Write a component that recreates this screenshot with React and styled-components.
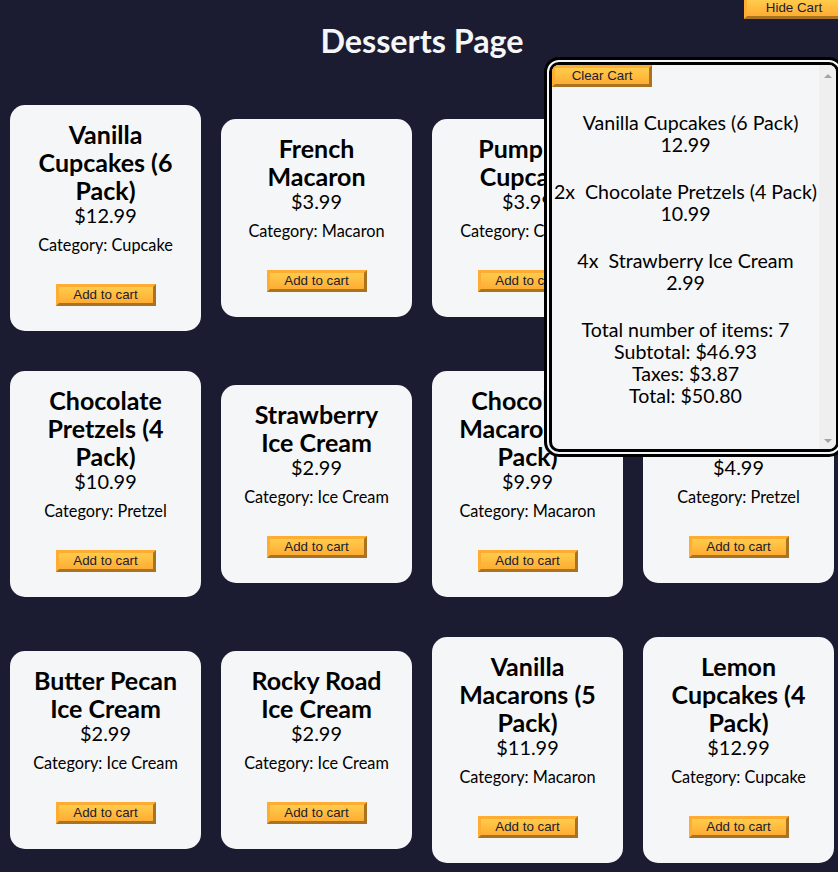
import React from "react";
import styled, { createGlobalStyle } from "styled-components";

const GlobalStyle = createGlobalStyle`
  *, *::before, *::after { margin: 0; padding: 0; box-sizing: border-box; }
  html, body {
    background-color: #1b1b32;
    overflow: hidden;
  }
  body {
    font-family: "Lato", "Liberation Sans", sans-serif;
    color: #000;
  }
`;

const Page = styled.div`
  display: flow-root;
  position: relative;
  width: 844px;
`;

const Title = styled.h1`
  color: #f5f6f7;
  text-align: center;
  font-size: 32.3px;
  line-height: 38px;
  font-weight: 700;
  margin: 22px 0 25px;
`;

const CardContainer = styled.div`
  display: flex;
  flex-direction: row;
  flex-wrap: wrap;
  justify-content: space-evenly;
  align-items: center;
`;

const Card = styled.div`
  flex: 1 0 21%;
  margin: 20px 10px;
  padding: 15px;
  background-color: #f5f6f7;
  text-align: center;
  border-radius: 15px;
`;

const CardName = styled.h2`
  font-size: 25px;
  line-height: 28px;
  font-weight: 700;
  padding: 0 4px;
`;

const Price = styled.p`
  font-size: 19.9px;
  line-height: 22px;
`;

const Category = styled.p`
  font-size: 16.3px;
  line-height: 18px;
  margin-top: 10px;
`;

const Btn = styled.button`
  cursor: pointer;
  width: 100px;
  height: 22px;
  padding: 0 6px;
  font-family: "Liberation Sans", Arial, sans-serif;
  font-size: 13.333px;
  line-height: 16px;
  color: #1b1b32;
  background-color: #feac32;
  background-image: linear-gradient(#fecc4c, #ffac33);
  border: 3px outset #feac32;
  &:hover {
    background-image: linear-gradient(#ffcc4c, #f89808);
  }
`;

const AddButton = styled(Btn)`
  display: block;
  margin: 30px auto 10px;
`;

const CartToggle = styled(Btn)`
  position: absolute;
  top: -3px;
  right: 0;
`;

const ClearButton = styled(Btn)`
  display: block;
`;

const Cart = styled.div`
  position: absolute;
  top: 57px;
  right: 0;
  width: 300px;
  height: 400px;
  display: flex;
  background-color: #f5f6f7;
  border: 8px double #000;
  border-radius: 15px;
  overflow: hidden;
`;

const CartContent = styled.div`
  flex: 1;
  min-width: 0;
  overflow-y: auto;
  text-align: center;
  font-size: 19.6px;
  line-height: 22px;
`;

const ScrollTrack = styled.div`
  flex: 0 0 17px;
  display: flex;
  flex-direction: column;
  justify-content: space-between;
  align-items: center;
  padding: 9px 0 6px;
  background-color: #efefef;
`;

const Arrow = styled.span`
  width: 0;
  height: 0;
  border-left: 4.5px solid transparent;
  border-right: 4.5px solid transparent;
  ${(p) =>
    p.$down
      ? "border-top: 4px solid #a3a3a3;"
      : "border-bottom: 4px solid #a3a3a3;"}
`;

const Product = styled.div`
  margin: 25px 0;
`;

const Line = styled.p``;

const Count = styled.span`
  display: inline-block;
  margin-right: 10px;
`;

const products = [
  { id: 1, name: "Vanilla Cupcakes (6 Pack)", price: 12.99, category: "Cupcake" },
  { id: 2, name: "French Macaron", price: 3.99, category: "Macaron" },
  { id: 3, name: "Pumpkin Cupcake", price: 3.99, category: "Cupcake" },
  { id: 4, name: "Chocolate Cupcake", price: 5.99, category: "Cupcake" },
  { id: 5, name: "Chocolate Pretzels (4 Pack)", price: 10.99, category: "Pretzel" },
  { id: 6, name: "Strawberry Ice Cream", price: 2.99, category: "Ice Cream" },
  { id: 7, name: "Chocolate Macarons (4 Pack)", price: 9.99, category: "Macaron" },
  { id: 8, name: "Strawberry Pretzel", price: 4.99, category: "Pretzel" },
  { id: 9, name: "Butter Pecan Ice Cream", price: 2.99, category: "Ice Cream" },
  { id: 10, name: "Rocky Road Ice Cream", price: 2.99, category: "Ice Cream" },
  { id: 11, name: "Vanilla Macarons (5 Pack)", price: 11.99, category: "Macaron" },
  { id: 12, name: "Lemon Cupcakes (4 Pack)", price: 12.99, category: "Cupcake" },
];

const cartItems = [
  { id: 1, count: 1 },
  { id: 5, count: 2 },
  { id: 6, count: 4 },
];

export default function App() {
  const lines = cartItems.map((c) => ({ ...products.find((p) => p.id === c.id), count: c.count }));
  const totalItems = lines.reduce((s, l) => s + l.count, 0);
  const subtotal = lines.reduce((s, l) => s + l.count * l.price, 0);
  const taxes = Math.round(subtotal * 0.0825 * 100) / 100;
  const total = subtotal + taxes;

  return (
    <Page>
      <GlobalStyle />
      <CartToggle>Hide Cart</CartToggle>
      <Title>Desserts Page</Title>
      <CardContainer>
        {products.map((p) => (
          <Card key={p.id}>
            <CardName>{p.name}</CardName>
            <Price>${p.price.toFixed(2)}</Price>
            <Category>Category: {p.category}</Category>
            <AddButton>Add to cart</AddButton>
          </Card>
        ))}
      </CardContainer>
      <Cart>
        <CartContent>
          <ClearButton>Clear Cart</ClearButton>
          {lines.map((l) => (
            <Product key={l.id}>
              <Line>
                <Count>{l.count > 1 ? `${l.count}x` : ""}</Count>
                {l.name}
              </Line>
              <Line>{l.price}</Line>
            </Product>
          ))}
          <Line>Total number of items: {totalItems}</Line>
          <Line>Subtotal: ${subtotal.toFixed(2)}</Line>
          <Line>Taxes: ${taxes.toFixed(2)}</Line>
          <Line>Total: ${total.toFixed(2)}</Line>
        </CartContent>
        <ScrollTrack>
          <Arrow />
          <Arrow $down />
        </ScrollTrack>
      </Cart>
    </Page>
  );
}
